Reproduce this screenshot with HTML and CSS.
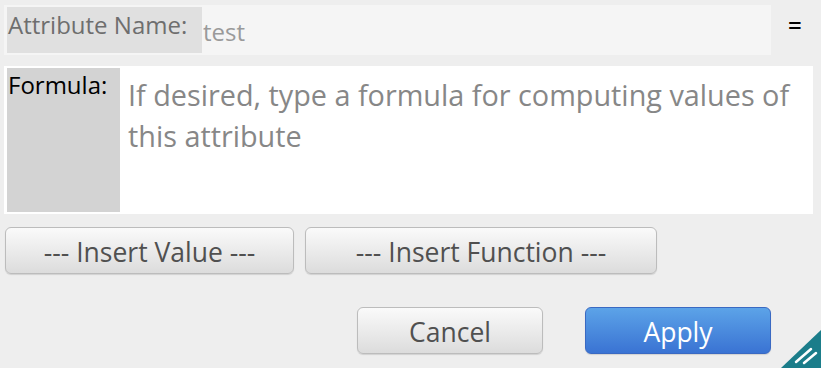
FILE: index.html
```html
<!DOCTYPE html>
<html lang="en">
<head>
<meta charset="utf-8">
<title>Attribute Formula</title>
<link rel="stylesheet" href="styles.css">
</head>
<body>
<div class="dialog">
  <div class="name-row">
    <div class="name-field">
      <label class="name-label" for="attr-name">Attribute Name:</label>
      <input class="name-input" id="attr-name" type="text" value="test">
    </div>
    <span class="equals">=</span>
  </div>
  <div class="formula-box">
    <div class="formula-label">Formula:</div>
    <textarea class="formula-input" placeholder="If desired, type a formula for computing values of this attribute"></textarea>
  </div>
  <div class="insert-row">
    <button class="btn btn-value">--- Insert Value ---</button>
    <button class="btn btn-function">--- Insert Function ---</button>
  </div>
  <div class="action-row">
    <button class="btn btn-action">Cancel</button>
    <button class="btn btn-action btn-apply">Apply</button>
  </div>
  <svg class="resize-corner" width="40" height="38" viewBox="0 0 40 38" aria-hidden="true">
    <polygon points="0,38 40,38 40,0" fill="#1b7d8a"/>
    <line x1="15" y1="32" x2="30" y2="19" stroke="#ffffff" stroke-width="2.5" stroke-linecap="round"/>
    <line x1="23" y1="33" x2="35" y2="23" stroke="#ffffff" stroke-width="2.5" stroke-linecap="round"/>
  </svg>
</div>
</body>
</html>
```

FILE: styles.css
```css
html, body {
  margin: 0;
  padding: 0;
  background: #eeeeee;
  overflow: hidden;
}

.dialog {
  position: relative;
  width: 821px;
  height: 368px;
  box-sizing: border-box;
  padding: 5px 8px 0 4px;
  font-family: "Open Sans", "DejaVu Sans", sans-serif;
}

.name-row {
  display: flex;
  align-items: flex-start;
  height: 50px;
}

.name-field {
  display: flex;
  width: 767px;
  height: 50px;
  box-sizing: border-box;
  padding: 2px 0 2px 3px;
  background: #f5f5f5;
}

.name-label {
  width: 195px;
  height: 46px;
  box-sizing: border-box;
  padding: 2px 0 0 1px;
  background: #e0e0e0;
  color: #6e6e6e;
  font-size: 24px;
  line-height: 32px;
  white-space: nowrap;
}

.name-input {
  flex: 1;
  height: 46px;
  box-sizing: border-box;
  margin: 0;
  padding: 2px 2px 0 1px;
  border: none;
  outline: none;
  background: #f5f5f5;
  color: #9a9a9a;
  font-family: inherit;
  font-size: 24px;
}

.equals {
  margin: 8px 0 0 17px;
  color: #000000;
  font-size: 24px;
  font-weight: 600;
  line-height: 24px;
}

.formula-box {
  display: flex;
  height: 148px;
  box-sizing: border-box;
  margin-top: 11px;
  padding: 2px 3px;
  background: #ffffff;
}

.formula-label {
  width: 112px;
  padding-left: 1px;
  background: #d3d3d3;
  color: #000000;
  font-size: 24px;
  line-height: 33px;
}

.formula-input {
  flex: 1;
  margin: 0;
  padding: 6px 4px 0 8px;
  border: none;
  outline: none;
  resize: none;
  overflow: hidden;
  background: #ffffff;
  color: #333333;
  font-family: inherit;
  font-size: 28.8px;
  line-height: 41px;
}

.formula-input::placeholder {
  color: #878787;
  opacity: 1;
}

.insert-row {
  display: flex;
  gap: 11px;
  margin: 13px 0 0 1px;
}

.btn {
  height: 47px;
  box-sizing: border-box;
  margin: 0;
  padding: 3px 0 0;
  border: 1px solid #bcbcbc;
  border-radius: 6px;
  background: linear-gradient(#fafafa, #dcdcdc);
  box-shadow: 0 1px 1px rgba(0, 0, 0, 0.12);
  color: #505050;
  font-family: inherit;
  font-size: 26.5px;
  line-height: 1;
  white-space: nowrap;
}

.btn-value {
  width: 289px;
}

.btn-function {
  width: 352px;
}

.action-row {
  display: flex;
  justify-content: flex-end;
  gap: 42px;
  margin: 33px 42px 0 0;
}

.btn-action {
  width: 186px;
}

.btn-apply {
  border-color: #3a69c2;
  background: linear-gradient(#5ca3e8, #3a73d3);
  color: #ffffff;
}

.resize-corner {
  position: absolute;
  right: 0;
  bottom: 0;
  display: block;
}
```
